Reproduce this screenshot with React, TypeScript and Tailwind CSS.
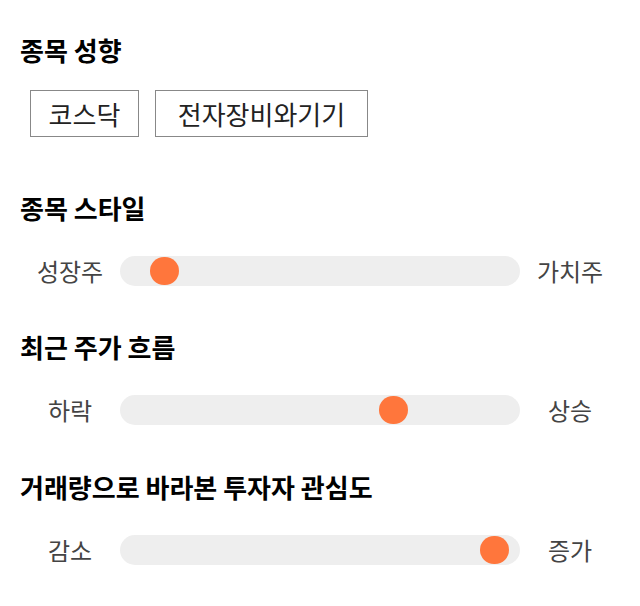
import React from "react";

const font = { fontFamily: '"Noto Sans CJK KR", "Noto Sans", sans-serif' };

function Thumbed({ left, right, x }: { left: string; right: string; x: number }) {
  return (
    <div className="flex items-center h-[44px]">
      <div className="w-[100px] text-center text-[24px] leading-[30px] text-[#444444]">{left}</div>
      <div className="relative w-[400px] h-[30px] rounded-full bg-[#eeeeee]">
        <div
          className="absolute top-[1px] w-[29px] h-[28px] rounded-full bg-[#ff763c]"
          style={{ left: x }}
        />
      </div>
      <div className="w-[100px] text-center text-[24px] leading-[30px] text-[#444444]">{right}</div>
    </div>
  );
}

export default function App() {
  return (
    <div className="w-[640px] h-[606px] bg-white px-[20px] pt-[35px]" style={font}>
      <h2 className="text-[26px] font-bold leading-[30px] text-black">종목 성향</h2>
      <div className="flex gap-[16px] mt-[25px] ml-[10px]">
        <div className="h-[47px] w-[109px] border border-[#888888] flex items-center justify-center text-[26px] leading-[30px] text-[#222222]">코스닥</div>
        <div className="h-[47px] w-[213px] border border-[#888888] flex items-center justify-center text-[26px] leading-[30px] text-[#222222]">전자장비와기기</div>
      </div>
      <h2 className="text-[26px] font-bold leading-[30px] text-black mt-[56px]">종목 스타일</h2>
      <div className="mt-[26px]">
        <Thumbed left="성장주" right="가치주" x={30} />
      </div>
      <h2 className="text-[26px] font-bold leading-[30px] text-black mt-[39px]">최근 주가 흐름</h2>
      <div className="mt-[26px]">
        <Thumbed left="하락" right="상승" x={259} />
      </div>
      <h2 className="text-[26px] font-bold leading-[30px] text-black mt-[40px]">거래량으로 바라본 투자자 관심도</h2>
      <div className="mt-[26px]">
        <Thumbed left="감소" right="증가" x={360} />
      </div>
    </div>
  );
}
